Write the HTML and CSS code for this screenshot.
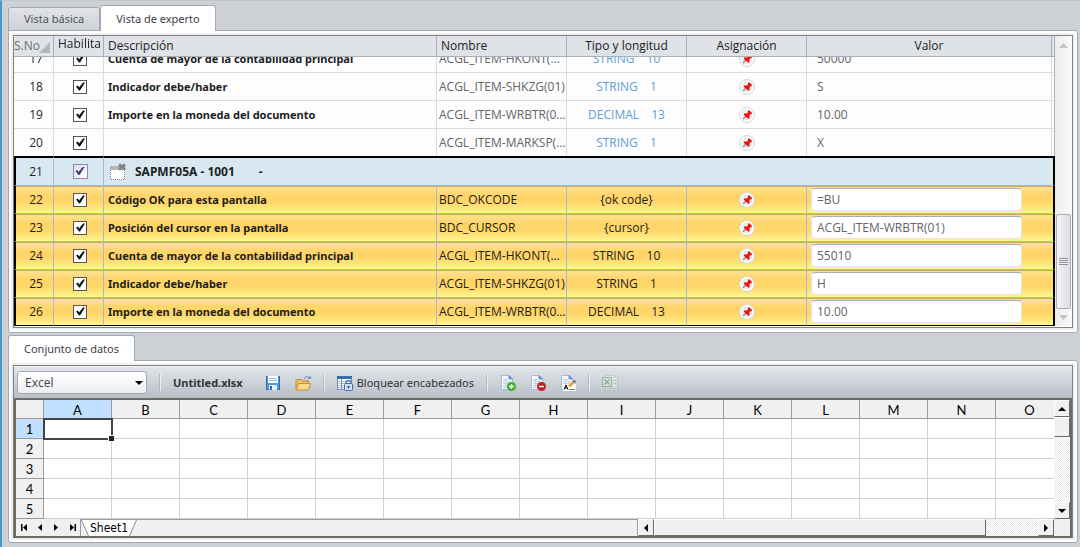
FILE: index.html
```html
<!DOCTYPE html>
<html lang="es">
<head>
  <meta charset="UTF-8">
  <meta name="viewport" content="width=device-width, initial-scale=1.0">
  <title>Vista de experto</title>
  <link rel="stylesheet" href="styles.css">
</head>
<body>

  <svg class="defs" width="0" height="0">
    <symbol id="pin" viewBox="0 0 16 16">
      <circle cx="8" cy="8" r="7.5" fill="#fff" stroke="#d4d6d8"/>
      <circle cx="8" cy="8" r="5.5" fill="#ececec"/>
      <path d="M4 12L7.5 8.5" stroke="#8a8a8a" stroke-width="1.2"/>
      <path d="M9 3.500L10.500 3.500L13 6L12.500 7.200L11 7.200L10.500 8.500V11.500H9L5 8V6.500H8L9 5.500Z" fill="#f40d0d"/>
    </symbol>
    <symbol id="page" viewBox="0 0 16 16">
      <path d="M1.5 .5H9L12.500 4V14.500H1.500Z" fill="#f3f7fd" stroke="#a9bcd8"/>
      <path d="M9 .5V4H12.500Z" fill="#6f93c4" stroke="#6f93c4"/>
      <path d="M3 4.500H8M3 6.500H11M3 8.500H11M3 10.500H11M3 12.500H11M5.500 4V13M8.500 6V13" stroke="#c3d3e8"/>
    </symbol>
  </svg>

  <div class="tabs" role="tablist">
    <button class="tab" role="tab">Vista básica</button>
    <button class="tab active" role="tab">Vista de experto</button>
  </div>
  <div class="panel">
    <div class="frame mapper">
      <div class="rows" id="rows">
        <table class="fields">
          <colgroup>
            <col class="c-no"><col class="c-on"><col class="c-desc"><col class="c-name">
            <col class="c-type"><col class="c-map"><col class="c-value"><col class="c-end">
          </colgroup>
          <thead>
            <tr>
              <th class="no">S.No</th>
              <th class="on">Habilita</th>
              <th>Descripción</th>
              <th>Nombre</th>
              <th class="mid">Tipo y longitud</th>
              <th class="mid">Asignación</th>
              <th class="mid">Valor</th>
              <th></th>
            </tr>
          </thead>
          <tbody>
            <tr>
              <td class="no">17</td>
              <td class="on"><input type="checkbox" class="check" aria-label="Habilitar 17" checked></td>
              <td class="desc">Cuenta de mayor de la contabilidad principal</td>
              <td class="name">ACGL_ITEM-HKONT(01)</td>
              <td class="type">STRING <span>10</span></td>
              <td class="map"><svg class="pin"><use href="#pin"/></svg></td>
              <td class="value">50000</td>
              <td></td>
            </tr>
            <tr>
              <td class="no">18</td>
              <td class="on"><input type="checkbox" class="check" aria-label="Habilitar 18" checked></td>
              <td class="desc">Indicador debe/haber</td>
              <td class="name">ACGL_ITEM-SHKZG(01)</td>
              <td class="type">STRING <span>1</span></td>
              <td class="map"><svg class="pin"><use href="#pin"/></svg></td>
              <td class="value">S</td>
              <td></td>
            </tr>
            <tr>
              <td class="no">19</td>
              <td class="on"><input type="checkbox" class="check" aria-label="Habilitar 19" checked></td>
              <td class="desc">Importe en la moneda del documento</td>
              <td class="name">ACGL_ITEM-WRBTR(01)</td>
              <td class="type">DECIMAL <span>13</span></td>
              <td class="map"><svg class="pin"><use href="#pin"/></svg></td>
              <td class="value">10.00</td>
              <td></td>
            </tr>
            <tr>
              <td class="no">20</td>
              <td class="on"><input type="checkbox" class="check" aria-label="Habilitar 20" checked></td>
              <td class="desc"></td>
              <td class="name">ACGL_ITEM-MARKSP(01)</td>
              <td class="type">STRING <span>1</span></td>
              <td class="map"><svg class="pin"><use href="#pin"/></svg></td>
              <td class="value">X</td>
              <td></td>
            </tr>
          </tbody>
          <tbody class="selected">
            <tr class="screen">
              <td class="no">21</td>
              <td class="on"><input type="checkbox" class="check" aria-label="Habilitar 21" checked></td>
              <td class="desc" colspan="6">
                <div class="screen-name">
                  <svg width="18" height="18" viewBox="0 0 18 18">
                    <rect x="1" y="5" width="15" height="12" fill="#fff"/>
                    <rect x="1" y="3" width="15" height="4" fill="#b5b5b5"/>
                    <path d="M1.500 7V16.500H15.500V7" fill="none" stroke="#777" stroke-dasharray="1 1"/>
                    <path d="M10 1.500L16 6.500M16 1.500L10 6.500" stroke="#858585" stroke-width="3"/>
                  </svg>
                  <span>SAPMF05A - 1001</span><span>-</span>
                </div>
              </td>
            </tr>
            <tr>
              <td class="no">22</td>
              <td class="on"><input type="checkbox" class="check" aria-label="Habilitar 22" checked></td>
              <td class="desc">Código OK para esta pantalla</td>
              <td class="name">BDC_OKCODE</td>
              <td class="type">{ok code}</td>
              <td class="map"><svg class="pin"><use href="#pin"/></svg></td>
              <td class="value" colspan="2"><input type="text" aria-label="Valor 22" value="=BU"></td>
            </tr>
            <tr>
              <td class="no">23</td>
              <td class="on"><input type="checkbox" class="check" aria-label="Habilitar 23" checked></td>
              <td class="desc">Posición del cursor en la pantalla</td>
              <td class="name">BDC_CURSOR</td>
              <td class="type">{cursor}</td>
              <td class="map"><svg class="pin"><use href="#pin"/></svg></td>
              <td class="value" colspan="2"><input type="text" aria-label="Valor 23" value="ACGL_ITEM-WRBTR(01)"></td>
            </tr>
            <tr>
              <td class="no">24</td>
              <td class="on"><input type="checkbox" class="check" aria-label="Habilitar 24" checked></td>
              <td class="desc">Cuenta de mayor de la contabilidad principal</td>
              <td class="name">ACGL_ITEM-HKONT(01)</td>
              <td class="type">STRING <span>10</span></td>
              <td class="map"><svg class="pin"><use href="#pin"/></svg></td>
              <td class="value" colspan="2"><input type="text" aria-label="Valor 24" value="55010"></td>
            </tr>
            <tr>
              <td class="no">25</td>
              <td class="on"><input type="checkbox" class="check" aria-label="Habilitar 25" checked></td>
              <td class="desc">Indicador debe/haber</td>
              <td class="name">ACGL_ITEM-SHKZG(01)</td>
              <td class="type">STRING <span>1</span></td>
              <td class="map"><svg class="pin"><use href="#pin"/></svg></td>
              <td class="value" colspan="2"><input type="text" aria-label="Valor 25" value="H"></td>
            </tr>
            <tr>
              <td class="no">26</td>
              <td class="on"><input type="checkbox" class="check" aria-label="Habilitar 26" checked></td>
              <td class="desc">Importe en la moneda del documento</td>
              <td class="name">ACGL_ITEM-WRBTR(01)</td>
              <td class="type">DECIMAL <span>13</span></td>
              <td class="map"><svg class="pin"><use href="#pin"/></svg></td>
              <td class="value" colspan="2"><input type="text" aria-label="Valor 26" value="10.00"></td>
            </tr>
          </tbody>
        </table>
      </div>
      <div class="scroll">
        <svg width="9" height="5" viewBox="0 0 9 5"><path d="M0 5L4.500 0L9 5Z" fill="#c6c6c6"/></svg>
        <div class="thumb"></div>
        <svg width="9" height="5" viewBox="0 0 9 5"><path d="M0 0L4.500 5L9 0Z" fill="#c6c6c6"/></svg>
      </div>
    </div>
  </div>

  <div class="tabs lower" role="tablist">
    <button class="tab active" role="tab">Conjunto de datos</button>
  </div>
  <div class="panel">
    <div class="frame data">
      <div class="toolbar">
        <div class="picker">
          <select aria-label="Origen de datos">
            <option>Excel</option>
          </select>
        </div>
        <span class="sep"></span>
        <span class="file-name">Untitled.xlsx</span>
        <div class="tools">
          <button class="tool" aria-label="Guardar">
            <svg width="16" height="16" viewBox="0 0 16 16">
              <path d="M1.500 1.500H14.500V14.500H1.500Z" fill="#4f9be0" stroke="#2d6cb5"/>
              <rect x="3" y="1" width="10" height="7" fill="#fff"/>
              <path d="M4 3.500H12M4 5.500H12" stroke="#9fc3ea"/>
              <rect x="4" y="10" width="8" height="5" fill="#e6eef7"/>
              <rect x="5" y="11" width="2" height="4" fill="#2d6cb5"/>
            </svg>
          </button>
          <button class="tool" aria-label="Abrir">
            <svg width="16" height="16" viewBox="0 0 16 16">
              <path d="M1 14.500V5.500L2 4.500H6L7.500 6H13.500V9" fill="#efc266" stroke="#b98a2c"/>
              <path d="M1 15L3.500 8.500H15.500L13.500 15Z" fill="#fbd98a" stroke="#c8922e"/>
              <path d="M9.500 3.500C10.500 .8 13.500 .8 14.500 4" fill="none" stroke="#5c85b8"/>
              <path d="M12.500 3.500H16V1Z" fill="#5c85b8"/>
            </svg>
          </button>
        </div>
        <span class="sep"></span>
        <button class="tool lock">
          <svg width="16" height="16" viewBox="0 0 16 16">
            <rect x=".5" y="1.500" width="14" height="13" fill="#fff" stroke="#6f8fc0"/>
            <rect x="0" y="1" width="15" height="3" fill="#3f6cab"/>
            <path d="M1 6.500H14M1 8.500H14M1 10.500H14M1 12.500H14" stroke="#b4c4de"/>
            <path d="M4.500 4V15" stroke="#6f8fc0"/>
            <path d="M9 9V7.500C9 4.800 14 4.800 14 7.500V9" fill="none" stroke="#4e80c4" stroke-width="1.500"/>
            <rect x="7.500" y="8.500" width="8" height="7" rx="1" fill="#cfe0f6" stroke="#3f6cab"/>
            <path d="M10 11H13L11.500 14Z" fill="#2c4f86"/>
          </svg>
          Bloquear encabezados
        </button>
        <span class="sep"></span>
        <div class="tools">
          <button class="tool" aria-label="Agregar hoja">
            <svg width="16" height="16" viewBox="0 0 16 16">
              <use href="#page" width="16" height="16"/>
              <circle cx="11.500" cy="11.500" r="4.500" fill="#33b51f"/>
              <path d="M11.500 9V14M9 11.500H14" stroke="#fff" stroke-width="1.500"/>
            </svg>
          </button>
          <button class="tool" aria-label="Eliminar hoja">
            <svg width="16" height="16" viewBox="0 0 16 16">
              <use href="#page" width="16" height="16"/>
              <circle cx="11.500" cy="11.500" r="4.500" fill="#c22018"/>
              <path d="M9 11.500H14" stroke="#fff" stroke-width="1.500"/>
            </svg>
          </button>
          <button class="tool" aria-label="Cambiar nombre">
            <svg width="16" height="16" viewBox="0 0 16 16">
              <use href="#page" width="16" height="16"/>
              <rect x="3" y="9" width="13" height="7" fill="#fff"/>
              <path d="M4 14.500L6 10L8 14.500M5 13H7M9.500 14.500H10.500M11.500 14.500H12.500M13.500 14.500H14.500" fill="none" stroke="#000"/>
              <path d="M9 11.500L14.500 6" stroke="#f0a23c" stroke-width="3"/>
              <path d="M13.500 5.500L15.500 7.500" stroke="#5578b0" stroke-width="2"/>
            </svg>
          </button>
        </div>
        <span class="sep"></span>
        <button class="tool" aria-label="Abrir en Excel" disabled>
          <svg width="16" height="16" viewBox="0 0 16 16">
            <path d="M3.500 .5H12L15.500 4V15.500H3.500Z" fill="#e6ece8" stroke="#a9bcae"/>
            <path d="M11 5.500H14M11 8.500H14M5 13.500H14" stroke="#9db8a3"/>
            <rect x=".5" y="2.500" width="9" height="9" fill="#dcebdc" stroke="#5c9a66"/>
            <path d="M2.500 4.500L7.500 9.500M7.500 4.500L2.500 9.500" stroke="#4b9156" stroke-width="1.500"/>
          </svg>
        </button>
      </div>

      <div class="sheet">
        <div class="grid">
          <div class="cells">
            <table class="spread" id="spread"></table>
          </div>
          <div class="vbar">
            <button class="arrow" aria-label="Subir"><svg width="8" height="4" viewBox="0 0 8 4"><path d="M0 4L4 0L8 4Z"/></svg></button>
            <div class="grip"></div>
            <div class="track"></div>
            <button class="arrow" aria-label="Bajar"><svg width="8" height="4" viewBox="0 0 8 4"><path d="M0 0L4 4L8 0Z"/></svg></button>
          </div>
        </div>
        <div class="sheetbar">
          <div class="nav">
            <button aria-label="Primera hoja"><svg width="7" height="7" viewBox="0 0 7 7"><path d="M0 0H1.500V7H0ZM6 0V7L2 3.500Z"/></svg></button>
            <button aria-label="Hoja anterior"><svg width="7" height="7" viewBox="0 0 7 7"><path d="M5 0V7L1 3.500Z"/></svg></button>
            <button aria-label="Hoja siguiente"><svg width="7" height="7" viewBox="0 0 7 7"><path d="M1 0V7L5 3.500Z"/></svg></button>
            <button aria-label="Última hoja"><svg width="7" height="7" viewBox="0 0 7 7"><path d="M5.500 0H7V7H5.500ZM1 0V7L5 3.500Z"/></svg></button>
          </div>
          <div class="sheet-tabs">
            <svg width="8" height="17" viewBox="0 0 8 17"><path d="M0 0H8V17Z" fill="#fff"/><path d="M.5 0L7.500 16" stroke="#8c8c8c"/></svg>
            <button class="sheet-tab">Sheet1</button>
            <svg width="8" height="17" viewBox="0 0 8 17"><path d="M0 0H8L0 17Z" fill="#fff"/><path d="M7.500 0L.5 16" stroke="#8c8c8c"/></svg>
          </div>
          <div class="hbar">
            <button class="arrow" aria-label="Izquierda"><svg width="4" height="8" viewBox="0 0 4 8"><path d="M4 0V8L0 4Z"/></svg></button>
            <div class="grip"></div>
            <div class="track"></div>
            <button class="arrow" aria-label="Derecha"><svg width="4" height="8" viewBox="0 0 4 8"><path d="M0 0V8L4 4Z"/></svg></button>
          </div>
        </div>
      </div>
    </div>
  </div>

  <script src="script.js"></script>
</body>
</html>
```
FILE: styles.css
```css
* {
  box-sizing: border-box;
}
body {
  margin: 0;
  padding: 4px 2px 4px 6px;
  border-top: 1px solid #c2c5ca;
  border-left: 2px solid #4a98c9;
  background-color: #cdd0d5;
  font-family: "Open Sans", "Noto Sans", sans-serif;
  font-size: 12px;
  line-height: 16px;
  color: #1e1e1e;
}
button, input, select {
  font: inherit;
  color: inherit;
}
button {
  padding: 0;
  border: none;
  background: none;
}
svg {
  display: block;
}
.defs {
  position: absolute;
}
.tab, .lock, .desc, .file-name {
  font-family: "Noto Sans", sans-serif;
  font-size: 11px;
}

/* tabs and panels */
.tabs {
  display: flex;
  align-items: flex-end;
  position: relative;
  margin-bottom: -1px;
}
.tabs.lower {
  margin-top: 2px;
}
.tab {
  height: 24px;
  padding: 0 15px;
  border: 1px solid #a3a9b2;
  border-radius: 3px 3px 0 0;
  background: linear-gradient(#e2e4e8, #cdd0d5);
  color: #50545a;
}
.tab.active {
  height: 26px;
  border-bottom: none;
  background: #fff;
  color: #3c4048;
}
.panel {
  padding: 2px;
  border: 1px solid #a3a9b2;
  border-radius: 0 3px 3px 3px;
  background: #fff;
}
.frame {
  margin: 2px;
  border: 1px solid #808080;
  outline: 2px solid #f0f0f0;
}

/* field list */
.mapper {
  display: flex;
  padding-bottom: 1px;
  background: #fdfdfe;
}
.rows {
  flex: 1;
  height: 290px;
  overflow: hidden;
}
.fields {
  width: 100%;
  table-layout: fixed;
  border-collapse: separate;
  border-spacing: 0;
}
.c-no { width: 40px; }
.c-on { width: 50px; }
.c-desc { width: 333px; }
.c-name { width: 130px; }
.c-type, .c-map { width: 120px; }
.c-end { width: 3px; }
.fields th {
  position: sticky;
  top: 0;
  z-index: 1;
  height: 21px;
  padding: 0 4px;
  border-right: 1px solid #a9afb8;
  border-bottom: 1px solid #a9afb8;
  background: #dfe2e7;
  font-weight: normal;
  text-align: left;
  white-space: nowrap;
}
.fields th:last-child {
  padding: 0;
}
.fields th.mid {
  text-align: center;
}
.fields th.no {
  padding: 0;
  text-align: left;
  color: #6b6f76;
}
.fields th.no::after {
  content: "";
  position: absolute;
  right: 3px;
  bottom: 3px;
  width: 11px;
  height: 11px;
  background: #b3b5b9;
  clip-path: polygon(100% 0, 100% 100%, 0 100%);
}
.fields th.on {
  padding-bottom: 4px;
}
.fields td {
  height: 28px;
  padding: 0 4px;
  border-right: 1px solid #d9dbdf;
  border-bottom: 1px solid #d9dbdf;
  white-space: nowrap;
}
.fields td:last-child {
  padding: 0;
  border-right-color: #a9b4c6;
}
.fields tbody:not(.selected) tr:last-child td {
  height: 27px;
  border-bottom: none;
}
.fields .no {
  padding-left: 9px;
  text-align: center;
}
.fields td.on {
  padding: 0 0 0 3px;
  text-align: center;
}
.desc {
  font-weight: bold;
}
.fields td.name {
  padding: 0 0 0 2px;
  overflow: hidden;
  text-overflow: ellipsis;
  color: #636466;
}
.type {
  text-align: center;
  color: #5f9fd8;
}
.type span {
  margin-left: 9px;
}
.fields td.value {
  padding-left: 10px;
  color: #636466;
}
.pin {
  width: 16px;
  height: 16px;
  margin: 0 auto;
}
.check {
  appearance: none;
  display: block;
  width: 14px;
  height: 14px;
  margin: 0 auto;
  border: 1px solid #555;
  background: #fff;
}
.check:checked::before {
  content: "";
  display: block;
  height: 12px;
  background: #111;
  clip-path: polygon(2px 6px, 4px 5px, 5px 7px, 9px 2px, 11px 2px, 6px 10px, 5px 10px);
}

/* selected block */
.fields .selected td {
  border-right-color: #a9b9d2;
  border-bottom-color: #a9b9d2;
  background: linear-gradient(#d3a75d 1px, #ffe291 1px, #ffd468 10px, #ffd76a 17px, #fff590);
}
.fields .selected .name,
.fields .selected .type {
  color: #1e1e1e;
}
.fields .selected td:first-child {
  padding-left: 7px;
  border-left: 2px solid #000;
}
.fields .selected td:last-child {
  border-right: 2px solid #000;
}
.fields .selected tr:last-child td {
  border-bottom-color: #000;
}
.fields .selected .screen td {
  height: 30px;
  border-top: 2px solid #000;
  background: #d8e8f1;
}
.screen .check {
  width: 15px;
  height: 15px;
  border-color: #8c8ca8;
  background: linear-gradient(135deg, #dcdce8, #fff);
}
.screen .check:checked::before {
  height: 13px;
  background: #3e3e78;
}
.screen-name {
  display: flex;
  align-items: center;
  gap: 24px;
  padding-left: 5px;
  font-size: 12px;
}
.screen-name svg {
  margin-right: -16px;
}
.fields .selected td.value {
  padding-left: 4px;
}
.value input {
  display: block;
  width: 211px;
  height: 23px;
  padding: 0 5px;
  border: 1px solid #dfe3ea;
  border-top-color: #a9adb3;
  border-radius: 4px;
  background: #fff;
}

.scroll {
  display: flex;
  flex-direction: column;
  align-items: center;
  width: 17px;
  padding: 7px 0 6px;
  background: linear-gradient(90deg, #ececed, #fafafa);
}
.thumb {
  width: 15px;
  height: 95px;
  margin: auto 0 6px;
  border: 1px solid #a9adb6;
  border-radius: 2px;
  background:
    repeating-linear-gradient(#8d9097 0 1px, #f2f2f4 1px 2px) center / 9px 7px no-repeat,
    linear-gradient(90deg, #f4f4f6, #dddee2);
}

/* toolbar */
.data {
  border-bottom: none;
}
.toolbar {
  display: flex;
  align-items: center;
  gap: 12px;
  height: 32px;
  padding: 0 3px;
  border-top: 1px solid #f4f5f7;
  background: linear-gradient(#e2e5ea, #b9bec7);
}
.picker {
  position: relative;
}
.picker::after {
  content: "";
  position: absolute;
  top: 10px;
  right: 4px;
  width: 8px;
  height: 4px;
  background: #000;
  clip-path: polygon(0 0, 100% 0, 50% 100%);
  pointer-events: none;
}
.picker select {
  appearance: none;
  display: block;
  width: 130px;
  height: 23px;
  padding: 0 7px;
  border: 1px solid #a3a9b2;
  border-radius: 3px;
  background: linear-gradient(#fff, #eceef1);
  color: #444;
}
.sep {
  width: 2px;
  height: 17px;
  border-left: 1px solid #b3b7be;
  border-right: 1px solid #eceef1;
}
.file-name {
  padding-right: 10px;
  font-weight: bold;
  color: #333;
}
.tools {
  display: flex;
  gap: 14px;
}
.lock {
  display: flex;
  align-items: center;
  gap: 4px;
  color: #333;
  white-space: nowrap;
}
.tool:disabled {
  opacity: 0.5;
}

/* spreadsheet */
.sheet {
  border: 2px solid #6a6a6a;
  background: #fff;
  font-family: Lato, "Noto Sans", sans-serif;
  color: #000;
}
.grid {
  display: flex;
}
.cells {
  flex: 1;
  min-width: 0;
  overflow: hidden;
}
.spread {
  width: 1048px;
  table-layout: fixed;
  border-collapse: separate;
  border-spacing: 0;
  font-size: 13px;
  line-height: 16px;
}
.spread th {
  height: 19px;
  padding: 0;
  border-right: 1px solid #9a9a9a;
  border-bottom: 1px solid #9a9a9a;
  background: #f0f0f0;
  font-weight: normal;
}
.spread thead th {
  padding-top: 2px;
}
.spread th:first-child {
  width: 28px;
}
.spread th.current {
  background: #c1dfff;
}
.spread td {
  height: 20px;
  padding: 0;
  border-right: 1px solid #d0d0d0;
  border-bottom: 1px solid #d0d0d0;
}
.spread td.current {
  position: relative;
  outline: 2px solid #444;
  outline-offset: -1px;
}
.spread td.current::after {
  content: "";
  position: absolute;
  right: -3px;
  bottom: -3px;
  width: 5px;
  height: 5px;
  border: 1px solid #fff;
  border-width: 1px 0 0 1px;
  background: #222;
}
.vbar {
  display: flex;
  flex-direction: column;
  width: 16px;
}
.arrow, .grip {
  display: flex;
  align-items: center;
  justify-content: center;
  flex: none;
  width: 16px;
  height: 17px;
  border: 1px solid #fff;
  border-right-color: #6a6a6a;
  border-bottom-color: #6a6a6a;
  background: #f0f0f0;
}
.vbar .grip {
  height: 20px;
}
.track {
  flex: 1;
  background: repeating-conic-gradient(#e9e9e9 0 25%, #fff 0 50%) 0 0 / 2px 2px;
}
.sheetbar {
  display: flex;
  height: 17px;
  background: #f0f0f0;
}
.nav {
  display: flex;
  width: 65px;
  border-right: 1px solid #9a9a9a;
}
.nav button {
  display: flex;
  align-items: center;
  justify-content: center;
  flex: 1;
}
.sheet-tabs {
  display: flex;
  flex: 1;
  border-top: 1px solid #9a9a9a;
  border-right: 1px solid #9a9a9a;
}
.sheet-tab {
  padding: 0 1px;
  background: #fff;
  font-family: "DejaVu Sans Condensed", "DejaVu Sans", sans-serif;
}
.hbar {
  display: flex;
  width: 41%;
  padding-right: 16px;
}
.hbar .grip {
  flex: 0 1 332px;
}
```
FILE: script.js
```js
const letters = "ABCDEFGHIJKLMNO".split("");
const spread = document.getElementById("spread");

// Header row with the column letters
let html = "<thead><tr><th></th>";
letters.forEach((letter, i) => {
  html += `<th${i === 0 ? ' class="current"' : ""}>${letter}</th>`;
});
html += "</tr></thead><tbody>";

// Empty rows, A1 is the active cell
for (let row = 1; row <= 5; row++) {
  html += `<tr><th${row === 1 ? ' class="current"' : ""}>${row}</th>`;
  letters.forEach((letter, i) => {
    html += row === 1 && i === 0 ? '<td class="current"></td>' : "<td></td>";
  });
  html += "</tr>";
}
spread.innerHTML = html + "</tbody>";

// Keep the last rows in view
const rows = document.getElementById("rows");
rows.scrollTop = rows.scrollHeight;
```
